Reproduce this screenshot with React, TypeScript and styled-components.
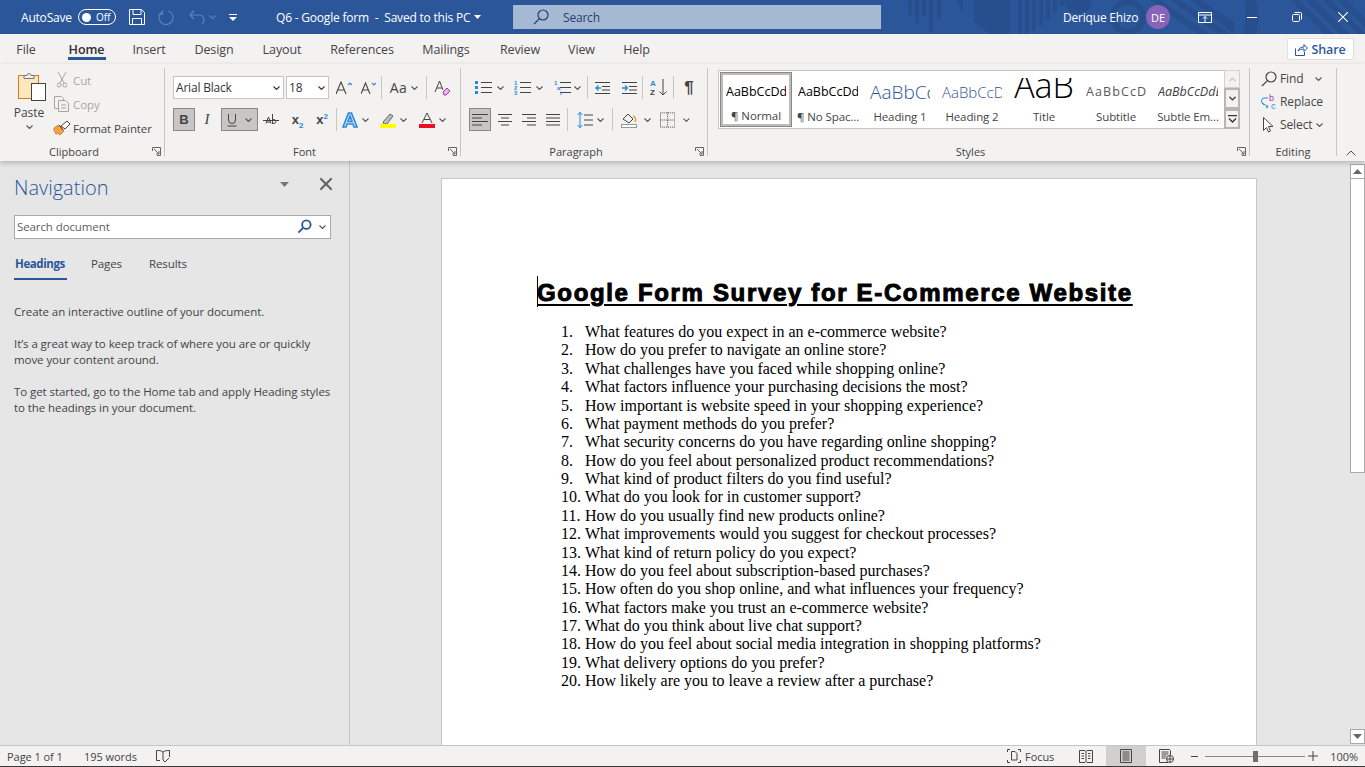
import React from "react";
import styled, { createGlobalStyle } from "styled-components";
import { ChevronDown, ChevronUp, X } from "lucide-react";

const UI = `"Open Sans", "Noto Sans", sans-serif`;
const BLUE = "#2b579a";
const INK = "#444444";

const GlobalStyle = createGlobalStyle`
  html, body { margin: 0; padding: 0; background: #e6e6e6; }
  * { box-sizing: border-box; }
  body { font-family: ${UI}; overflow: hidden; }
`;

const Shell = styled.div`
  width: 1365px;
  height: 767px;
  display: flex;
  flex-direction: column;
  overflow: hidden;
`;
const Spacer = styled.span<{ $w?: number }>`
  flex: ${(p) => (p.$w ? "none" : 1)};
  width: ${(p) => p.$w ?? 0}px;
`;

/* title bar */
const TitleBar = styled.header`
  position: relative;
  height: 34px;
  flex: none;
  background: ${BLUE};
  color: #fff;
  display: flex;
  align-items: center;
  font-size: 12px;
  letter-spacing: -0.2px;
`;
const TitlePattern = styled.svg`
  position: absolute;
  left: 0;
  top: 0;
`;
const Slot = styled.div<{ $w: number; $ml?: number }>`
  position: relative;
  width: ${(p) => p.$w}px;
  margin-left: ${(p) => p.$ml ?? 0}px;
  flex: none;
  display: flex;
  align-items: center;
  justify-content: center;
  white-space: nowrap;
`;
const AutoSaveLabel = styled.div`
  position: relative;
  width: 78px;
  flex: none;
  padding-left: 21px;
  white-space: nowrap;
`;
const Toggle = styled.div`
  position: relative;
  width: 38px;
  height: 16px;
  flex: none;
  border: 1px solid #fff;
  border-radius: 8px;
  display: flex;
  align-items: center;
  gap: 5px;
  padding-left: 3px;
  font-size: 10px;
  letter-spacing: 0;
  &::before {
    content: "";
    width: 9px;
    height: 9px;
    border-radius: 50%;
    background: #fff;
  }
`;
const TitleText = styled.div`
  position: relative;
  margin-left: 39px;
  width: 237px;
  flex: none;
  display: flex;
  align-items: center;
  gap: 4px;
  white-space: pre;
  font-size: 12px;
`;
const SearchBox = styled.div`
  position: relative;
  width: 368px;
  height: 24px;
  flex: none;
  background: #a6b9d3;
  color: #1f3f70;
  display: flex;
  align-items: center;
  padding-left: 20px;
  gap: 14px;
  font-size: 12px;
  letter-spacing: -0.2px;
`;
const UserName = styled.div`
  position: relative;
  margin-left: 182px;
  width: 74px;
  flex: none;
  white-space: nowrap;
  font-size: 12px;
`;
const Avatar = styled.div`
  position: relative;
  width: 24px;
  height: 24px;
  margin-left: 9px;
  flex: none;
  border-radius: 50%;
  background: #8764b8;
  display: flex;
  align-items: center;
  justify-content: center;
  font-size: 11px;
  letter-spacing: 0;
`;

/* tabs */
const TabRow = styled.nav`
  height: 30px;
  flex: none;
  background: #f3f2f1;
  display: flex;
  padding-left: 3px;
  padding-top: 4px;
`;
const Tab = styled.div<{ $w: number; $active?: boolean }>`
  position: relative;
  width: ${(p) => p.$w}px;
  height: 24px;
  flex: none;
  text-align: center;
  font-size: 12.5px;
  line-height: 24px;
  letter-spacing: -0.1px;
  font-weight: ${(p) => (p.$active ? 600 : 400)};
  color: ${(p) => (p.$active ? "#2f2f2f" : INK)};
  ${(p) =>
    p.$active &&
    `&::after {
      content: "";
      position: absolute;
      left: 19px;
      width: 38px;
      bottom: 2px;
      height: 3px;
      background: ${BLUE};
    }`}
`;
const ShareButton = styled.button`
  margin-left: auto;
  margin-right: 11px;
  width: 67px;
  height: 22px;
  border: 1px solid #e1dfdd;
  border-radius: 2px;
  background: #fff;
  color: ${BLUE};
  font: 600 12.5px ${UI};
  letter-spacing: -0.1px;
  display: flex;
  align-items: center;
  justify-content: center;
  gap: 3px;
  padding: 0;
`;

/* ribbon */
const Ribbon = styled.section`
  position: relative;
  height: 97px;
  flex: none;
  background: #f3f2f1;
  box-shadow: 0 2px 5px rgba(0, 0, 0, 0.22);
  display: flex;
  z-index: 2;
`;
const Group = styled.div<{ $w: number }>`
  width: ${(p) => p.$w}px;
  flex: none;
  display: flex;
  flex-direction: column;
`;
const GroupBody = styled.div`
  height: 80px;
  flex: none;
`;
const GroupFoot = styled.div<{ $launcher?: boolean }>`
  position: relative;
  height: 16px;
  text-align: center;
  font-size: 11px;
  line-height: 15px;
  color: ${INK};
  padding-right: ${(p) => (p.$launcher ? 16 : 0)}px;
`;
const Launcher = styled.svg`
  position: absolute;
  right: 3px;
  top: 3px;
`;
const GroupSep = styled.div`
  width: 1px;
  flex: none;
  margin: 4px 0 5px;
  background: #c8c6c4;
`;
const ClipBody = styled(GroupBody)`
  display: flex;
`;
const PasteCol = styled.div`
  width: 53px;
  flex: none;
  padding: 7px 0 0 5px;
  display: flex;
  flex-direction: column;
  align-items: center;
  font-size: 12px;
  color: ${INK};
  line-height: 16px;
  gap: 4px;
`;
const PasteIcon = styled.svg`
  margin-left: 5px;
`;
const ClipList = styled.div`
  padding-top: 4px;
  display: flex;
  flex-direction: column;
`;
const ClipItem = styled.div<{ $off?: boolean }>`
  height: 24px;
  display: flex;
  align-items: center;
  gap: 3px;
  font-size: 11.5px;
  letter-spacing: -0.1px;
  color: ${(p) => (p.$off ? "#a6a6a6" : INK)};
`;
const ClipIcon = styled.span`
  width: 17px;
  display: flex;
  justify-content: center;
`;
const ToolRows = styled.div<{ $pad: number }>`
  padding: 12px 0 0 ${(p) => p.$pad}px;
  display: flex;
  flex-direction: column;
  gap: 9px;
`;
const ToolRow = styled.div`
  height: 23px;
  display: flex;
  align-items: center;
`;
const Tool = styled.div<{ $w: number; $on?: boolean; $gap?: number; $ml?: number }>`
  width: ${(p) => p.$w}px;
  height: 23px;
  margin-left: ${(p) => p.$ml ?? 0}px;
  flex: none;
  display: flex;
  align-items: center;
  justify-content: center;
  gap: ${(p) => p.$gap ?? 4}px;
  color: ${INK};
  background: ${(p) => (p.$on ? "#c8c6c4" : "transparent")};
  border: 1px solid ${(p) => (p.$on ? "#8a8886" : "transparent")};
`;
const ToolSep = styled.div`
  width: 1px;
  height: 23px;
  flex: none;
  background: #c8c6c4;
`;
const Combo = styled.div<{ $w: number }>`
  width: ${(p) => p.$w}px;
  height: 23px;
  flex: none;
  margin-right: 2px;
  background: #fff;
  border: 1px solid #c8c6c4;
  display: flex;
  align-items: center;
  justify-content: space-between;
  padding: 0 3px 0 2px;
  font-size: 12px;
  letter-spacing: -0.2px;
  color: #333;
`;
const Serif = styled.span`
  font-family: "Liberation Serif", serif;
  font-style: italic;
  font-size: 15px;
`;
const Bold = styled.span`
  font-family: "Liberation Sans", sans-serif;
  font-weight: 700;
  font-size: 13px;
`;
const CaseLabel = styled.span`
  font-size: 14px;
  letter-spacing: 0.4px;
`;
const SubSup = styled.span`
  font: 700 13px "Liberation Sans", sans-serif;
  color: ${INK};
  sub, sup {
    font-size: 8px;
    color: #2b88d8;
    line-height: 0;
  }
`;
const Pilcrow = styled.span`
  font: 700 17px "Liberation Sans", sans-serif;
  color: ${INK};
`;

/* style gallery */
const Gallery = styled.div`
  margin: 6px 0 0 10px;
  width: 521px;
  height: 59px;
  background: #fff;
  border: 1px solid #c8c6c4;
  display: flex;
  padding: 1px 0 1px 1px;
`;
const StyleCard = styled.div<{ $sel?: boolean }>`
  width: 72px;
  flex: none;
  display: flex;
  flex-direction: column;
  align-items: center;
  padding: ${(p) => (p.$sel ? "0" : "3px")} 0 0;
  border: ${(p) => (p.$sel ? "3px solid #bebcba" : "none")};
  outline: ${(p) => (p.$sel ? "1px solid #8a8886" : "none")};
  outline-offset: -1px;
`;
const Preview = styled.div<{
  $color?: string;
  $size?: number;
  $italic?: boolean;
  $spacing?: number;
  $light?: boolean;
}>`
  width: 60px;
  height: 34px;
  overflow: hidden;
  white-space: nowrap;
  text-align: left;
  line-height: 34px;
  color: ${(p) => p.$color ?? "#000"};
  font-size: ${(p) => p.$size ?? 12.5}px;
  font-weight: ${(p) => (p.$light ? 300 : 400)};
  font-style: ${(p) => (p.$italic ? "italic" : "normal")};
  letter-spacing: ${(p) => p.$spacing ?? 0}px;
`;
const TitlePreview = styled(Preview)`
  text-align: center;
  font-weight: 300;
  line-height: 15px;
  height: 22px;
  margin: 3px 0 9px;
`;
const StyleName = styled.div`
  font-size: 11.5px;
  letter-spacing: -0.1px;
  line-height: 16px;
  color: ${INK};
  white-space: nowrap;
`;
const GalleryScroll = styled.div`
  margin: -2px -1px -2px auto;
  width: 16px;
  flex: none;
  display: flex;
  flex-direction: column;
  background: #f3f2f1;
`;
const ScrollCell = styled.div<{ $on?: boolean }>`
  flex: 1;
  display: flex;
  align-items: center;
  justify-content: center;
  border: ${(p) => (p.$on ? "2px solid #b8b6b4" : "1px solid #d2d0ce")};
`;
const EditList = styled.div`
  padding: 3px 0 0 11px;
  display: flex;
  flex-direction: column;
`;
const EditItem = styled.div`
  height: 23px;
  display: flex;
  align-items: center;
  gap: 3px;
  font-size: 12px;
  letter-spacing: -0.1px;
  color: ${INK};
`;
const CollapseSlot = styled.div`
  flex: 1;
  display: flex;
  align-items: flex-end;
  justify-content: center;
  color: ${INK};
`;

/* main */
const Main = styled.main`
  flex: 1;
  min-height: 0;
  display: flex;
  background: #e6e6e6;
`;
const NavPane = styled.aside`
  width: 350px;
  flex: none;
  border-right: 1px solid #c6c6c6;
  padding: 14px 13px 0 14px;
  display: flex;
  flex-direction: column;
`;
const NavHead = styled.div`
  display: flex;
  align-items: center;
  height: 26px;
`;
const NavTitle = styled.div`
  flex: 1;
  font-size: 20px;
  font-weight: 300;
  line-height: 26px;
  color: ${BLUE};
`;
const NavControls = styled.div`
  display: flex;
  align-items: center;
  gap: 27px;
  margin-bottom: 8px;
`;
const NavSearch = styled.div`
  margin-top: 14px;
  width: 317px;
  height: 24px;
  background: #fff;
  border: 1px solid #ababab;
  display: flex;
  align-items: center;
  padding: 0 4px 1px 2px;
  font-size: 11.5px;
  letter-spacing: -0.1px;
  color: #605e5c;
`;
const NavTabs = styled.div`
  margin-top: 13px;
  display: flex;
  height: 28px;
`;
const NavTab = styled.div<{ $w: number; $active?: boolean }>`
  position: relative;
  width: ${(p) => p.$w}px;
  flex: none;
  font-size: 11.5px;
  line-height: 24px;
  font-weight: ${(p) => (p.$active ? 700 : 400)};
  letter-spacing: ${(p) => (p.$active ? -0.4 : -0.1)}px;
  color: ${(p) => (p.$active ? BLUE : INK)};
  padding-left: 1px;
  ${(p) =>
    p.$active &&
    `&::after {
      content: "";
      position: absolute;
      left: 0;
      bottom: 0;
      width: 53px;
      height: 2px;
      background: ${BLUE};
    }`}
`;
const NavCopy = styled.div`
  margin-top: 24px;
  display: flex;
  flex-direction: column;
  gap: 16px;
  font-size: 11.5px;
  letter-spacing: -0.07px;
  line-height: 16px;
  color: ${INK};
`;
const DocArea = styled.div`
  flex: 1;
  min-width: 0;
  padding: 17px 0 0 91px;
  overflow: hidden;
`;
const Page = styled.article`
  width: 816px;
  height: 640px;
  background: #fff;
  border: 1px solid #c6c6c6;
  padding: 97px 0 0 95px;
`;
const Heading = styled.h1`
  position: relative;
  margin: 0;
  font: 700 24px/33px "Liberation Sans", Arial, sans-serif;
  -webkit-text-stroke: 1px #000;
  letter-spacing: 1.66px;
  color: #000;
  text-decoration: underline;
  text-decoration-thickness: 1.5px;
  text-underline-offset: 3px;
  white-space: nowrap;
  &::before {
    content: "";
    position: absolute;
    left: 0;
    top: 0;
    width: 1px;
    height: 31px;
    background: #000;
  }
`;
const Questions = styled.ol`
  list-style: none;
  margin: 14px 0 0;
  padding: 0 0 0 24px;
  font: 16px/18.37px "Liberation Serif", "Times New Roman", serif;
  color: #000;
`;
const Question = styled.li`
  display: flex;
  white-space: nowrap;
`;
const QNum = styled.span`
  width: 24px;
  flex: none;
`;
const ScrollBar = styled.div`
  width: 15px;
  flex: none;
  display: flex;
  flex-direction: column;
  justify-content: space-between;
  padding: 3px 0 1px;
`;
const ScrollBtn = styled.div`
  width: 15px;
  height: 15px;
  background: #fff;
  border: 1px solid #ababab;
  display: flex;
  align-items: center;
  justify-content: center;
`;
const ScrollThumb = styled.div`
  width: 15px;
  height: 294px;
  background: #fff;
  border: 1px solid #ababab;
  border-top: none;
`;
const ScrollTop = styled.div``;

/* status bar */
const StatusBar = styled.footer`
  height: 22px;
  flex: none;
  background: #f3f2f1;
  border-top: 1px solid #c6c6c6;
  border-bottom: 1px solid #3a3a3a;
  display: flex;
  align-items: center;
  font-size: 11px;
  color: ${INK};
  letter-spacing: -0.05px;
`;
const StatusText = styled.span<{ $w: number; $pad?: number }>`
  width: ${(p) => p.$w}px;
  padding-left: ${(p) => p.$pad ?? 0}px;
  flex: none;
  white-space: nowrap;
`;
const StatusRight = styled.div`
  margin-left: auto;
  display: flex;
  align-items: center;
  height: 100%;
`;
const ViewBtn = styled.div<{ $w: number; $on?: boolean }>`
  width: ${(p) => p.$w}px;
  height: 100%;
  flex: none;
  display: flex;
  align-items: center;
  justify-content: center;
  background: ${(p) => (p.$on ? "#d2d0ce" : "transparent")};
`;
const FocusBtn = styled.div`
  width: 59px;
  flex: none;
  display: flex;
  align-items: center;
  gap: 4px;
`;
const ZoomTrack = styled.div`
  position: relative;
  width: 100px;
  height: 1px;
  margin: 0 1px 0 4px;
  background: #8a8886;
  &::after {
    content: "";
    position: absolute;
    left: 48px;
    top: -5px;
    width: 5px;
    height: 11px;
    background: #6f6f6f;
  }
`;
const ZoomValue = styled.span`
  width: 46px;
  flex: none;
  text-align: right;
  padding-right: 7px;
`;

/* drawings */
const Tiny = ({ c = "#555" }: { c?: string }) => (
  <svg width="7" height="4" viewBox="0 0 7 4" fill="none" stroke={c} strokeWidth="1.1"><path d="M.5.5 3.5 3.5 6.5.5" /></svg>
);
const LauncherIcon = () => (
  <Launcher width="9" height="9" viewBox="0 0 9 9" fill="none" stroke="#666"><path d="M.5 4V.5H8.5V8.5H5M2 2l5 5M7 4v3H4" /></Launcher>
);
const Lines = ({ rows, w = 16 }: { rows: [number, number][]; w?: number }) => (
  <svg width={w} height="14" viewBox={`0 0 ${w} 14`} stroke="#444">
    {rows.map(([a, b], i) => (
      <path key={i} d={`M${a} ${1.5 + i * 3.5}H${b}`} />
    ))}
  </svg>
);
const ListIcon = ({ kind }: { kind: string }) => (
  <svg width="17" height="16" viewBox="0 0 17 16" fill="none">
    <g stroke="#444"><path d="M6 2.5h11M6 7.5h11M6 12.5h11" /></g>
    {kind === "bullet" && <g fill="#2b88d8"><rect x="0" y="1" width="3" height="3" /><rect x="0" y="6" width="3" height="3" /><rect x="0" y="11" width="3" height="3" /></g>}
    {kind === "number" && <g fill="#2b88d8" fontSize="6" fontFamily="Liberation Sans" fontWeight="700"><text x="0" y="5">1</text><text x="0" y="10">2</text><text x="0" y="15">3</text></g>}
    {kind === "multi" && <g fill="#2b88d8" fontSize="6" fontFamily="Liberation Sans" fontWeight="700"><text x="0" y="5">1</text><text x="3" y="10">a</text><text x="6" y="15">i</text></g>}
  </svg>
);
const IndentIcon = ({ dir }: { dir: number }) => (
  <svg width="15" height="14" viewBox="0 0 15 14" fill="none">
    <path d="M0 1.5h15M7 5.5h8M7 9h8M0 12.5h15" stroke="#444" />
    <path d={dir < 0 ? "M6 7H1M3.5 4.5 1 7l2.5 2.5" : "M0 7h5M3 4.5 5.5 7 3 9.5"} stroke="#2b88d8" strokeWidth="1.3" />
  </svg>
);
const Lens = ({ c, s = 16 }: { c: string; s?: number }) => (
  <svg width={s} height={s} viewBox="0 0 16 16" fill="none" stroke={c} strokeWidth="1.2"><circle cx="10" cy="6" r="5" /><path d="M6.4 9.6 1 15" /></svg>
);

const tabs: [string, number][] = [["File", 46], ["Home", 75], ["Insert", 50], ["Design", 80], ["Layout", 56], ["References", 104], ["Mailings", 64], ["Review", 84], ["View", 39], ["Help", 71]];

const questions = [
  "What features do you expect in an e-commerce website?",
  "How do you prefer to navigate an online store?",
  "What challenges have you faced while shopping online?",
  "What factors influence your purchasing decisions the most?",
  "How important is website speed in your shopping experience?",
  "What payment methods do you prefer?",
  "What security concerns do you have regarding online shopping?",
  "How do you feel about personalized product recommendations?",
  "What kind of product filters do you find useful?",
  "What do you look for in customer support?",
  "How do you usually find new products online?",
  "What improvements would you suggest for checkout processes?",
  "What kind of return policy do you expect?",
  "How do you feel about subscription-based purchases?",
  "How often do you shop online, and what influences your frequency?",
  "What factors make you trust an e-commerce website?",
  "What do you think about live chat support?",
  "How do you feel about social media integration in shopping platforms?",
  "What delivery options do you prefer?",
  "How likely are you to leave a review after a purchase?",
];

const SAMPLE = "AaBbCcDdEe";

export default function App() {
  return (
    <Shell>
      <GlobalStyle />
      <TitleBar>
        <TitlePattern width="1365" height="34" viewBox="0 0 1365 34" fill="#274f8d">
          <rect x="908" width="4" height="15" />
          <rect x="915" width="4" height="23" />
          <rect x="922" width="4" height="16" />
          <rect x="929" width="4" height="32" />
          <rect x="937" width="4" height="20" />
          <path d="M956 0h7v15zM974 0h36v34h-20l-16-12z" />
          <path d="M1018 0h4v34h-4zM1025 0h4v34h-4zM1032 0h4v31h-4zM1039 0h4v26h-4zM1046 0h4v20h-4zM1053 0h4v13h-4zM1060 0h4v6h-4z" />
          <circle cx="1078" cy="0" r="14" />
          <circle cx="1128" cy="17" r="15" fill="none" stroke="#274f8d" strokeWidth="6" />
          <path d="M1150 0h10l50 34h-12zM1170 0h10l50 34h-12zM1190 0h10l34 22v12z" />
          <path d="M1256 0a70 70 0 0 1 0 34h-14a60 60 0 0 0 2-34z" />
          <path d="M1290 0h8l36 34h-10zM1306 0h8l36 34h-10zM1322 0h8l35 33v1h-7zM1338 0h8l19 18v10z" />
        </TitlePattern>
        <AutoSaveLabel>AutoSave</AutoSaveLabel>
        <Toggle>Off</Toggle>
        <Slot $w={42}>
          <svg width="16" height="16" viewBox="0 0 16 16" fill="none" stroke="#fff"><path d="M.5.5h12l3 3v12H.5zM4 .5v5h8v-5M3.5 15.500v-6h9v6" /></svg>
        </Slot>
        <Slot $w={16}>
          <svg width="16" height="16" viewBox="0 0 16 16" fill="none" stroke="#5d80b8" strokeWidth="1.2"><path d="M10 1.500A7 7 0 1 1 4 2M4 .5V5H0" transform="translate(.5 .5)" /></svg>
        </Slot>
        <Slot $w={28} $ml={14}>
          <svg width="17" height="15" viewBox="0 0 17 15" fill="none" stroke="#5d80b8" strokeWidth="1.2"><path d="M5 .5 1 5l4 4M1 5h9a5 5 0 0 1 3 9" /></svg>
          <Spacer $w={3} />
          <Tiny c="#5d80b8" />
        </Slot>
        <Slot $w={8} $ml={13}>
          <svg width="8" height="7" viewBox="0 0 8 7" fill="#fff"><rect width="8" height="1" /><path d="M0 3h8L4 7z" /></svg>
        </Slot>
        <TitleText>
          Q6 - Google form  -  Saved to this PC
          <svg width="7" height="4" viewBox="0 0 7 4" fill="#fff"><path d="M0 0h7L3.500 4z" /></svg>
        </TitleText>
        <SearchBox>
          <Lens c="#1f3f70" />
          Search
        </SearchBox>
        <UserName>Derique Ehizo</UserName>
        <Avatar>DE</Avatar>
        <Slot $w={52} $ml={9}>
          <svg width="14" height="11" viewBox="0 0 14 11" fill="none" stroke="#fff"><path d="M.5.5h13v10H.5zM.5 3h13M7 10V4.500M5 6.500l2-2 2 2" /></svg>
        </Slot>
        <Slot $w={42}>
          <svg width="10" height="1" viewBox="0 0 10 1" fill="#fff"><rect width="10" height="1" /></svg>
        </Slot>
        <Slot $w={48}>
          <svg width="10" height="10" viewBox="0 0 10 10" fill="none" stroke="#fff"><rect x=".5" y="2.500" width="7" height="7" rx="1" /><path d="M2.500.5h6a1 1 0 0 1 1 1v6" /></svg>
        </Slot>
        <Slot $w={44}>
          <svg width="10" height="10" viewBox="0 0 10 10" fill="none" stroke="#fff" strokeWidth="1.1"><path d="M0 0l10 10M10 0 0 10" /></svg>
        </Slot>
      </TitleBar>

      <TabRow>
        {tabs.map(([t, w]) => (
          <Tab key={t} $w={w} $active={t === "Home"}>{t}</Tab>
        ))}
        <ShareButton>
          <svg width="13" height="13" viewBox="0 0 13 13" fill="none" stroke="#2b579a"><path d="M.5 5.500v7h9V9M3 8c1-3 3-4 6-4V1.500l3.500 3.500L9 8.500V6C6.500 6 4.500 6.500 3 8z" /></svg>
          Share
        </ShareButton>
      </TabRow>

      <Ribbon>
        <Group $w={164}>
          <ClipBody>
            <PasteCol>
              <PasteIcon width="28" height="30" viewBox="0 0 28 30" fill="none">
                <rect x=".5" y="4.500" width="20" height="23" fill="#fde7bd" stroke="#d67c1c" />
                <path d="M6 4.500h3a2 2 0 0 1 4 0h3v3H6z" fill="#f3f2f1" stroke="#777" />
                <rect x="13.500" y="12.500" width="14" height="17" fill="#fff" stroke="#444" />
              </PasteIcon>
              <span>Paste</span>
              <Tiny />
            </PasteCol>
            <ClipList>
              <ClipItem $off>
                <ClipIcon><svg width="10" height="16" viewBox="0 0 10 16" fill="none" stroke="#a6a6a6"><path d="M1 0l6 11M9 0 3 11" /><circle cx="2" cy="13" r="2" /><circle cx="8" cy="13" r="2" /></svg></ClipIcon>
                Cut
              </ClipItem>
              <ClipItem $off>
                <ClipIcon><svg width="16" height="16" viewBox="0 0 16 16" fill="none" stroke="#a6a6a6"><path d="M.5.5h7l2 2V4M.5.5v12H4M4.500 4.500h7l3 3v8h-10zM7 9h5M7 12h5" /></svg></ClipIcon>
                Copy
              </ClipItem>
              <ClipItem>
                <ClipIcon><svg width="17" height="15" viewBox="0 0 17 15" fill="none"><path d="M1 7l5-3 5 6-4 4c-1 0-1-2-2-2s-1 1-2 1 0-2-1-2-1-3-1-4z" fill="#f7a249" stroke="#d67c1c" /><path d="M6 4l4 5M8 5l6-5 3 3-5 5z" fill="#fff" stroke="#444" /></svg></ClipIcon>
                Format Painter
              </ClipItem>
            </ClipList>
          </ClipBody>
          <GroupFoot $launcher>Clipboard<LauncherIcon /></GroupFoot>
        </Group>
        <GroupSep />

        <Group $w={295}>
          <GroupBody>
            <ToolRows $pad={8}>
              <ToolRow>
                <Combo $w={111}>Arial Black<Tiny c="#333" /></Combo>
                <Combo $w={43}>18<Tiny c="#333" /></Combo>
                <Tool $w={25}>
                  <svg width="16" height="14" viewBox="0 0 16 14" fill="none" stroke="#444" strokeWidth="1.1"><path d="M0 13 5 1l5 12M2 9h6" /><path d="M12 4l2-2 2 2" stroke="#2b88d8" /></svg>
                </Tool>
                <Tool $w={25}>
                  <svg width="15" height="13" viewBox="0 0 15 13" fill="none" stroke="#444" strokeWidth="1.1"><path d="M0 13 4.500 2 9 13M1.500 9h6" /><path d="M11 2l2 2 2-2" stroke="#2b88d8" /></svg>
                </Tool>
                <ToolSep />
                <Tool $w={44}><CaseLabel>Aa</CaseLabel><Tiny /></Tool>
                <ToolSep />
                <Tool $w={30}>
                  <svg width="17" height="16" viewBox="0 0 17 16" fill="none"><path d="M1 12 5.500 1 9 10M3 8h5" stroke="#444" /><path d="M9 12l4-4 3 3-4 4h-2z" fill="#e8b5e8" stroke="#a33da3" /></svg>
                </Tool>
              </ToolRow>
              <ToolRow>
                <Tool $w={22} $on><Bold>B</Bold></Tool>
                <Tool $w={24}><Serif>I</Serif></Tool>
                <Tool $w={37} $on $ml={2} $gap={8}>
                  <svg width="10" height="14" viewBox="0 0 10 14" fill="none" stroke="#444"><path d="M1.500 1v6a3.500 3.500 0 0 0 7 0V1M.5 13h9" /></svg>
                  <Tiny />
                </Tool>
                <Tool $w={26}>
                  <svg width="16" height="12" viewBox="0 0 16 12" fill="none" stroke="#444"><path d="M3 9.500 5.500 3 8 9.500M3.500 8h4M9.500 0v10M9.500 6a2 2 0 1 1 0 3M0 6.500h16" /></svg>
                </Tool>
                <Tool $w={27}><SubSup>x<sub>2</sub></SubSup></Tool>
                <Tool $w={22}><SubSup>x<sup>2</sup></SubSup></Tool>
                <Spacer $w={3} />
                <ToolSep />
                <Tool $w={37}>
                  <svg width="16" height="16" viewBox="0 0 16 16" fill="#cfe4f7" stroke="#2b88d8" strokeWidth="1.600"><path d="M1 15 6.500 1h3L15 15h-3l-1-3H5l-1 3zM6 9.500h4L8 4z" /></svg>
                  <Tiny />
                </Tool>
                <Tool $w={38}>
                  <svg width="16" height="16" viewBox="0 0 16 16" fill="none"><path d="M3 10 10 2l3 2-6 8H4z" fill="#bbb" stroke="#666" /><rect y="12" width="16" height="4" fill="#ffff00" /></svg>
                  <Tiny />
                </Tool>
                <Tool $w={40}>
                  <svg width="16" height="16" viewBox="0 0 16 16" fill="none"><path d="M3 11 8 1l5 10M5 7.500h6" stroke="#444" /><rect y="12" width="16" height="4" fill="#e81123" /></svg>
                  <Tiny />
                </Tool>
              </ToolRow>
            </ToolRows>
          </GroupBody>
          <GroupFoot $launcher>Font<LauncherIcon /></GroupFoot>
        </Group>
        <GroupSep />

        <Group $w={246}>
          <GroupBody>
            <ToolRows $pad={8}>
              <ToolRow>
                <Tool $w={40} $gap={5}><ListIcon kind="bullet" /><Tiny /></Tool>
                <Tool $w={39} $gap={5}><ListIcon kind="number" /><Tiny /></Tool>
                <Tool $w={39} $gap={3}><ListIcon kind="multi" /><Tiny /></Tool>
                <ToolSep />
                <Tool $w={29}><IndentIcon dir={-1} /></Tool>
                <Tool $w={25}><IndentIcon dir={1} /></Tool>
                <ToolSep />
                <Tool $w={30}>
                  <svg width="17" height="17" viewBox="0 0 17 17" fill="none">
                    <text x="0" y="7" fontSize="8" fontWeight="700" fontFamily="Liberation Sans" fill="#2b88d8">A</text>
                    <text x="0" y="16" fontSize="8" fontWeight="700" fontFamily="Liberation Sans" fill="#444">Z</text>
                    <path d="M13 0v16M9.500 12.500 13 16l3.500-3.500" stroke="#444" />
                  </svg>
                </Tool>
                <ToolSep />
                <Tool $w={30}><Pilcrow>¶</Pilcrow></Tool>
              </ToolRow>
              <ToolRow>
                <Tool $w={22} $on><Lines rows={[[0, 16], [0, 10], [0, 16], [0, 10]]} /></Tool>
                <Tool $w={28}><Lines rows={[[0, 14], [3, 11], [0, 14], [3, 11]]} w={14} /></Tool>
                <Tool $w={20}><Lines rows={[[0, 14], [5, 14], [0, 14], [5, 14]]} w={14} /></Tool>
                <Tool $w={28}><Lines rows={[[0, 14], [0, 14], [0, 14], [0, 14]]} w={14} /></Tool>
                <ToolSep />
                <Tool $w={44}>
                  <svg width="16" height="16" viewBox="0 0 16 16" fill="none"><path d="M7 3h9M7 8h9M7 13h9" stroke="#444" /><path d="M3 0v16M.5 3 3 .5 5.500 3M.5 13 3 15.500 5.500 13" stroke="#2b88d8" /></svg>
                  <Tiny />
                </Tool>
                <ToolSep />
                <Tool $w={46} $gap={7}>
                  <svg width="16" height="16" viewBox="0 0 16 16" fill="none"><path d="M2 7 7 2l5 5-4 4z" stroke="#444" /><path d="M12 4c3 1 3 4 2 6" stroke="#e0a040" strokeWidth="1.5" /><rect x=".5" y="12.500" width="15" height="3" fill="#fff" stroke="#999" /></svg>
                  <Tiny />
                </Tool>
                <Tool $w={32} $gap={8}>
                  <svg width="16" height="16" viewBox="0 0 16 16" fill="none" stroke="#444" strokeDasharray="1 1"><rect x=".5" y=".5" width="15" height="15" /><path d="M8 0v16M0 8h16" /></svg>
                  <Tiny />
                </Tool>
              </ToolRow>
            </ToolRows>
          </GroupBody>
          <GroupFoot $launcher>Paragraph<LauncherIcon /></GroupFoot>
        </Group>
        <GroupSep />

        <Group $w={541}>
          <GroupBody>
            <Gallery>
              <StyleCard $sel><Preview>{SAMPLE}</Preview><StyleName>¶ Normal</StyleName></StyleCard>
              <StyleCard><Preview>{SAMPLE}</Preview><StyleName>¶ No Spac...</StyleName></StyleCard>
              <StyleCard><Preview $size={19} $color="#2f5496" $light>{SAMPLE}</Preview><StyleName>Heading 1</StyleName></StyleCard>
              <StyleCard><Preview $size={15} $color="#2f5496" $light>{SAMPLE}</Preview><StyleName>Heading 2</StyleName></StyleCard>
              <StyleCard><TitlePreview $size={34}>AaB</TitlePreview><StyleName>Title</StyleName></StyleCard>
              <StyleCard><Preview $color="#595959" $spacing={1.1}>{SAMPLE}</Preview><StyleName>Subtitle</StyleName></StyleCard>
              <StyleCard><Preview $color="#404040" $italic>{SAMPLE}</Preview><StyleName>Subtle Em...</StyleName></StyleCard>
              <GalleryScroll>
                <ScrollCell><ChevronUp size={11} color="#c8c6c4" strokeWidth={3} /></ScrollCell>
                <ScrollCell $on><ChevronDown size={11} color="#333" strokeWidth={3} /></ScrollCell>
                <ScrollCell $on>
                  <svg width="9" height="8" viewBox="0 0 9 8" fill="none" stroke="#333" strokeWidth="1.3"><path d="M0 .7h9M1 3.500l3.500 3.500L8 3.500" /></svg>
                </ScrollCell>
              </GalleryScroll>
            </Gallery>
          </GroupBody>
          <GroupFoot $launcher>Styles<LauncherIcon /></GroupFoot>
        </Group>
        <GroupSep />

        <Group $w={86}>
          <GroupBody>
            <EditList>
              <EditItem><Lens c="#444" />Find<Spacer $w={5} /><Tiny /></EditItem>
              <EditItem>
                <svg width="16" height="16" viewBox="0 0 16 16" fill="none">
                  <text x="8" y="7" fontSize="9" fontFamily="Liberation Sans" fill="#a33da3">b</text>
                  <text x="10" y="15" fontSize="9" fontFamily="Liberation Sans" fill="#2b88d8">c</text>
                  <path d="M7 4H4a3 3 0 0 0-1 6l4 3M1 9l2 2M5 14l2-1-1-2" stroke="#2b88d8" />
                </svg>
                Replace
              </EditItem>
              <EditItem>
                <svg width="16" height="16" viewBox="0 0 16 16" fill="#fff" stroke="#444"><path d="M2.500 .5v13l3-3 2 4.500 2-1-2-4.500H12z" /></svg>
                Select
                <Tiny />
              </EditItem>
            </EditList>
          </GroupBody>
          <GroupFoot>Editing</GroupFoot>
        </Group>
        <GroupSep />
        <CollapseSlot><ChevronUp size={16} strokeWidth={1.4} /></CollapseSlot>
      </Ribbon>

      <Main>
        <NavPane>
          <NavHead>
            <NavTitle>Navigation</NavTitle>
            <NavControls>
              <Slot $w={9}>
                <svg width="9" height="5" viewBox="0 0 9 5" fill="#777"><path d="M0 0h9L4.500 5z" /></svg>
              </Slot>
              <Slot $w={20}><X size={20} color="#666" strokeWidth={2.6} /></Slot>
            </NavControls>
          </NavHead>
          <NavSearch>
            Search document
            <Spacer />
            <svg width="15" height="15" viewBox="0 0 16 16" fill="none" stroke="#2b579a" strokeWidth="2"><circle cx="10" cy="6" r="4.500" /><path d="M6.500 9.500 1.500 14.500" /></svg>
            <Spacer $w={7} />
            <Tiny />
          </NavSearch>
          <NavTabs>
            <NavTab $w={76} $active>Headings</NavTab>
            <NavTab $w={58}>Pages</NavTab>
            <NavTab $w={50}>Results</NavTab>
          </NavTabs>
          <NavCopy>
            <div>Create an interactive outline of your document.</div>
            <div>It’s a great way to keep track of where you are or quickly<br />move your content around.</div>
            <div>To get started, go to the Home tab and apply Heading styles<br />to the headings in your document.</div>
          </NavCopy>
        </NavPane>
        <DocArea>
          <Page>
            <Heading>Google Form Survey for E-Commerce Website</Heading>
            <Questions>
              {questions.map((q, i) => (
                <Question key={q}><QNum>{i + 1}.</QNum>{q}</Question>
              ))}
            </Questions>
          </Page>
        </DocArea>
        <ScrollBar>
          <ScrollTop>
            <ScrollBtn>
              <svg width="9" height="5" viewBox="0 0 9 5" fill="#666"><path d="M0 5h9L4.500 0z" /></svg>
            </ScrollBtn>
            <ScrollThumb />
          </ScrollTop>
          <ScrollBtn>
            <svg width="9" height="5" viewBox="0 0 9 5" fill="#666"><path d="M0 0h9L4.500 5z" /></svg>
          </ScrollBtn>
        </ScrollBar>
      </Main>

      <StatusBar>
        <StatusText $w={84} $pad={7}>Page 1 of 1</StatusText>
        <StatusText $w={72}>195 words</StatusText>
        <svg width="14" height="13" viewBox="0 0 14 13" fill="none" stroke="#444"><path d="M7 2C5 .5 3 .5.500.5v10H4M7 2c2-1.500 4-1.500 6.500-1.500V7M7 2v8M7 10l2 2 4-4" /></svg>
        <StatusRight>
          <FocusBtn>
            <svg width="14" height="14" viewBox="0 0 14 14" fill="none" stroke="#444"><path d="M.5 3V.5H3M11 .5h2.500V3M.5 11v2.500H3M11 13.500h2.500V11M4.500 11V2.500h3.500l2 2V11z" /></svg>
            Focus
          </FocusBtn>
          <ViewBtn $w={40}>
            <svg width="14" height="13" viewBox="0 0 14 13" fill="none" stroke="#444"><path d="M.5.5h5.500l1 1 1-1h5.500v12H8l-1-1-1 1H.5zM7 1.500v10M2.500 3.500h2.500M2.500 6h2.500M2.500 8.500h2.500M9 3.500h2.500M9 6h2.500M9 8.500h2.500" /></svg>
          </ViewBtn>
          <ViewBtn $w={40} $on>
            <svg width="12" height="14" viewBox="0 0 12 14" fill="none" stroke="#444"><path d="M.5.5h11v13H.5zM2.500 3h7M2.500 5h7M2.500 7h7M2.500 9h7M2.500 11h7" /></svg>
          </ViewBtn>
          <ViewBtn $w={40}>
            <svg width="15" height="14" viewBox="0 0 15 14" fill="none" stroke="#444"><path d="M9 13.500H.5V.5h10l1 1v5M2.500 3h7M2.500 5h7M2.500 7h5M2.500 9h4" /><circle cx="11" cy="10" r="3.500" fill="#f3f2f1" /><path d="M7.500 10h7M11 6.500v7" /></svg>
          </ViewBtn>
          <Slot $w={13} $ml={2}>
            <svg width="7" height="1" viewBox="0 0 7 1" fill="#444"><rect width="7" height="1" /></svg>
          </Slot>
          <ZoomTrack />
          <Slot $w={13}>
            <svg width="10" height="10" viewBox="0 0 10 10" fill="#444"><path d="M0 4.500h10v1H0zM4.500 0h1v10h-1z" /></svg>
          </Slot>
          <ZoomValue>100%</ZoomValue>
        </StatusRight>
      </StatusBar>
    </Shell>
  );
}
